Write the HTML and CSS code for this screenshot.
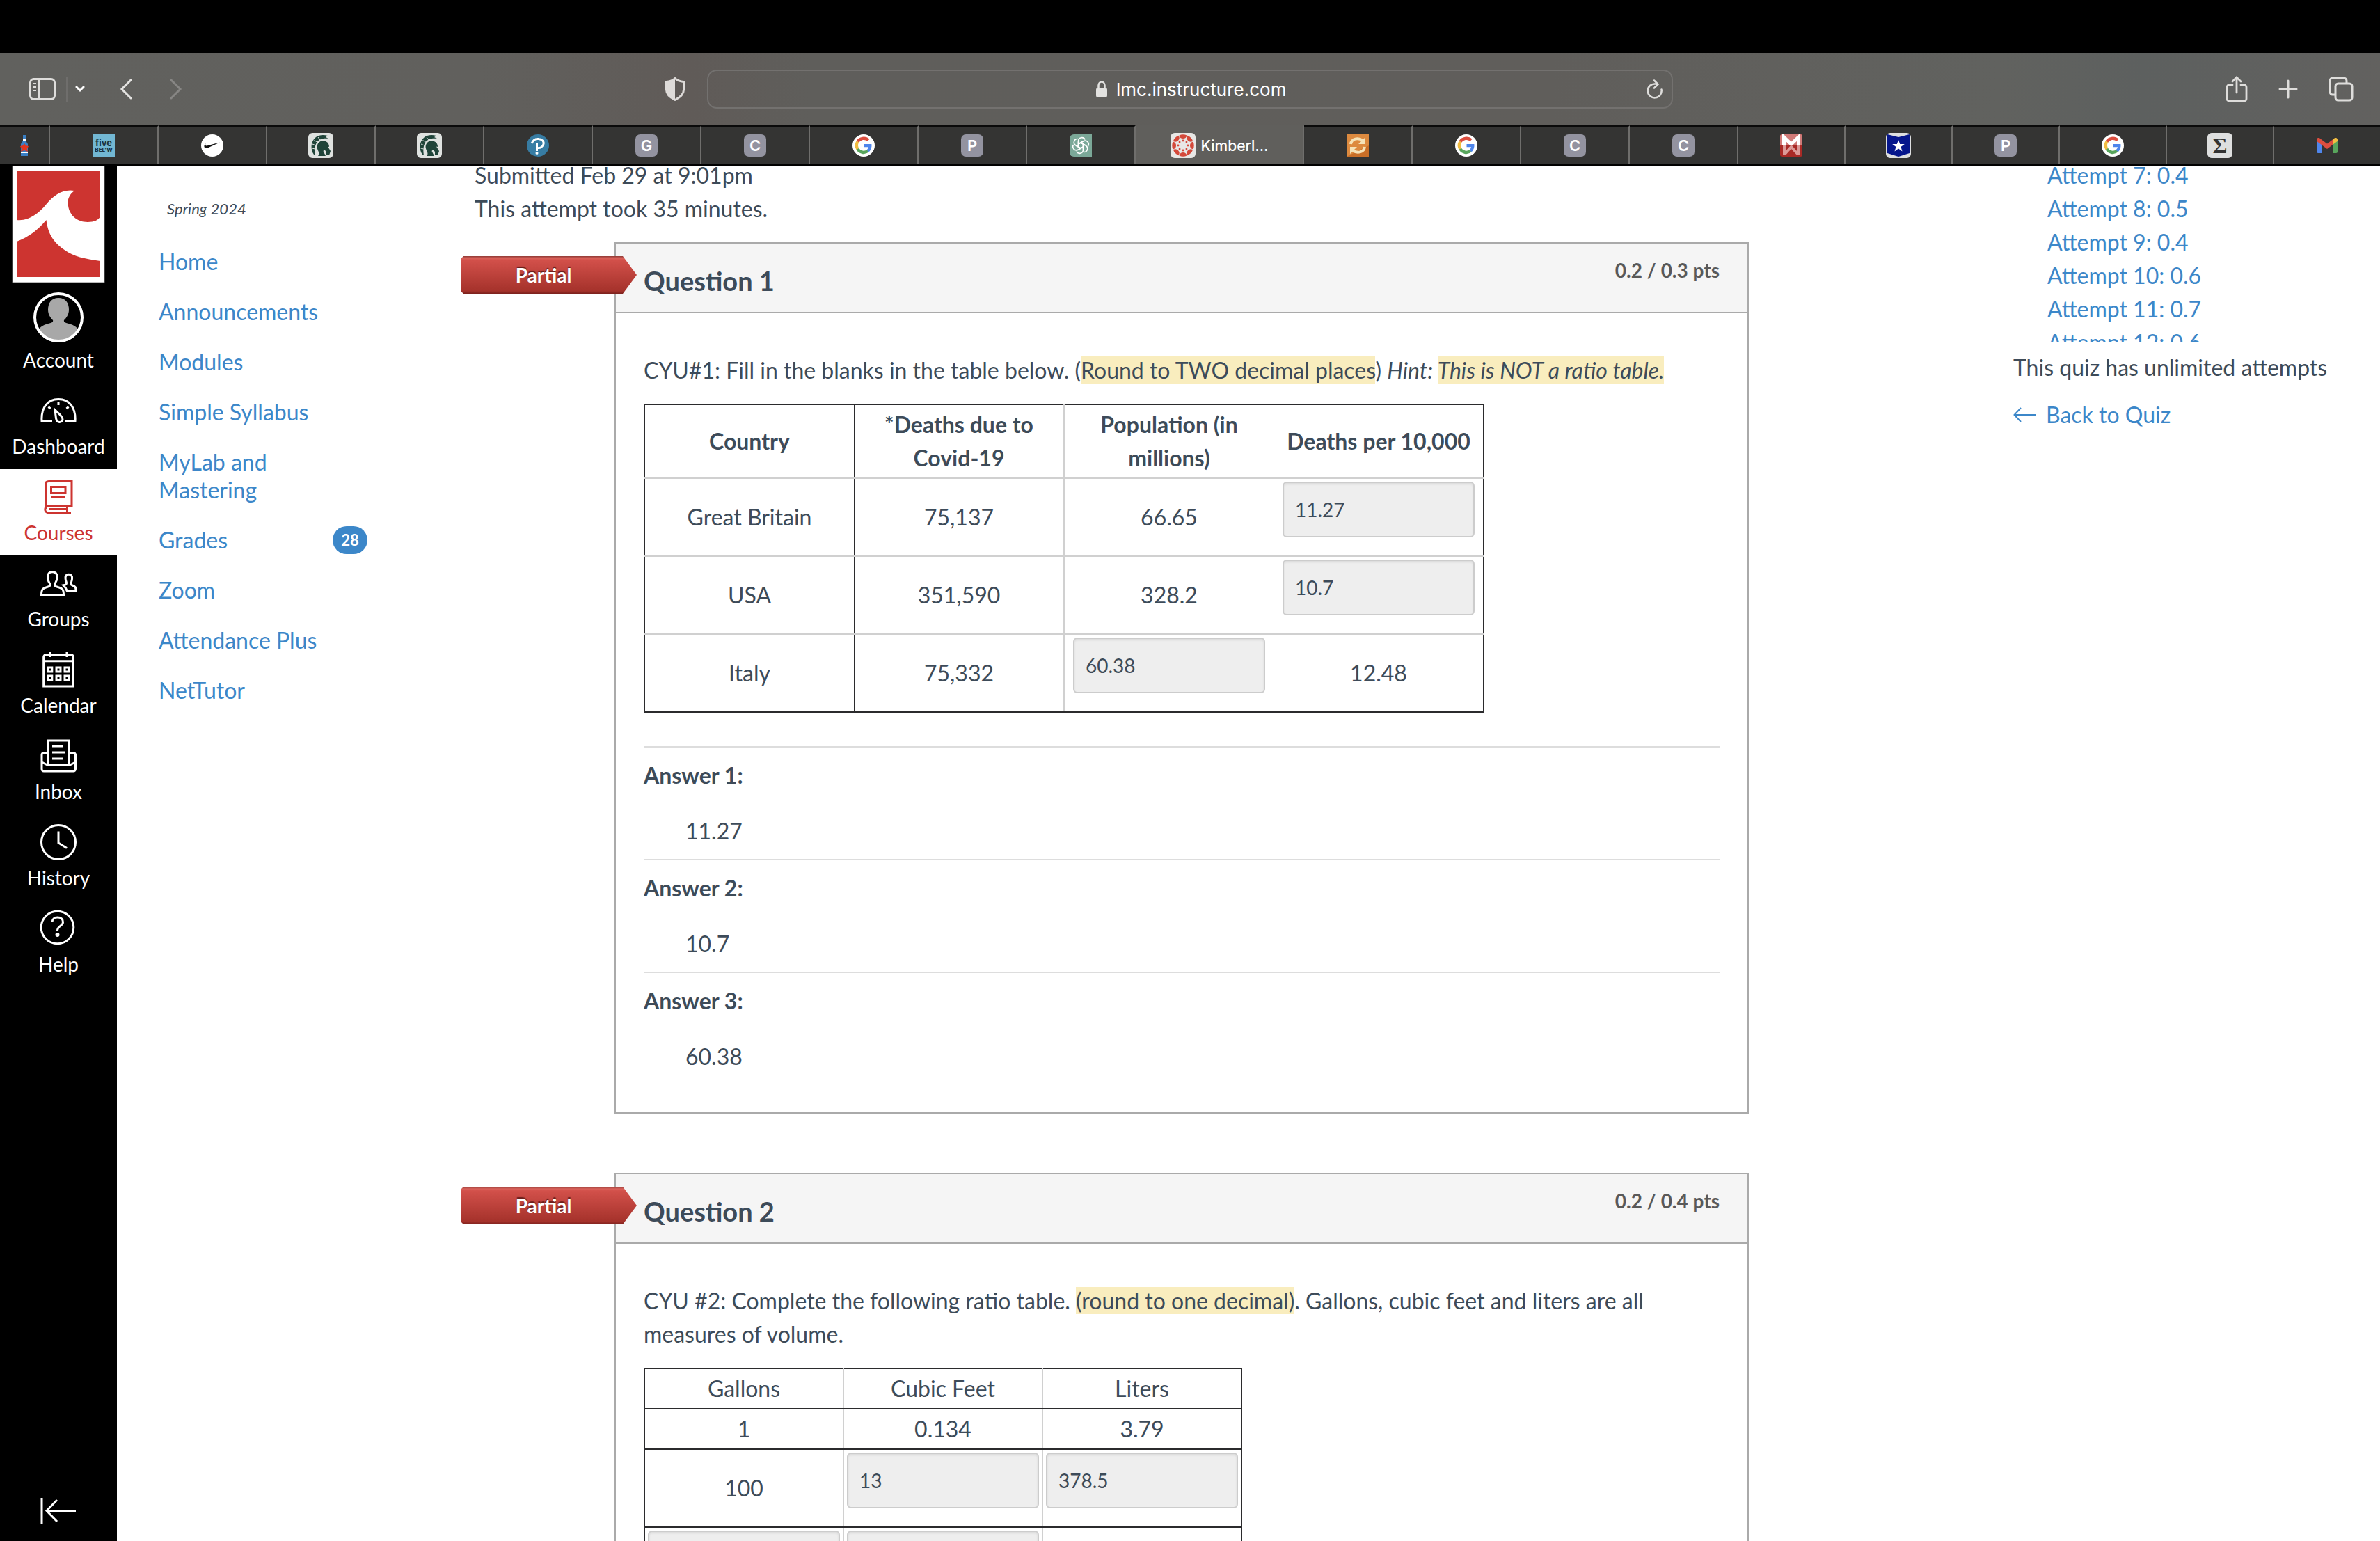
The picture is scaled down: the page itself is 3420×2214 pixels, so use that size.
FILE: index.html
```
<!DOCTYPE html>
<html lang="en">
<head>
  <meta charset="UTF-8" />
  <meta name="viewport" content="width=device-width, initial-scale=1.0"/>
  <title>Kimberl... - Quiz</title>
  <link rel="stylesheet" href="styles.css">
</head>
<body>

  <!-- shared icons -->
  <svg class="sprite" aria-hidden="true">
    <symbol id="google" viewBox="0 0 32 32">
      <circle cx="16" cy="16" r="16" fill="#fff"/>
      <path d="M7.3 10.6A10.3 10.3 0 0 1 23 8.4" fill="none" stroke="#dc4e3f" stroke-width="4.4"/>
      <path d="M7.5 21.3A10.3 10.3 0 0 1 7.5 10.4" fill="none" stroke="#f2bd42" stroke-width="4.4"/>
      <path d="M22.3 23.6A10 10 0 0 1 7.3 21" fill="none" stroke="#58a55c" stroke-width="4.4"/>
      <path d="M16.5 14H27.4C28 18.5 26.5 22.7 23.8 25.2L20.4 22.4C21.8 21.4 22.7 20 23 18.3H16.5Z" fill="#4f86ec"/>
    </symbol>
    <symbol id="spartan" viewBox="0 0 36 36">
      <rect width="36" height="36" rx="6" fill="#dfe2e0"/>
      <path d="M8 31C3 24 3 12 11 6C16 2.500 22 2.500 28 4L25 6L29 8C21 7 15 9 12 14C9 19 9 25 10 32Z" fill="#1f4439"/>
      <path d="M5.500 22l4 1M6 16l5 2M8.500 10.500l5 3M14 6l3 4" stroke="#dfe2e0" stroke-width="1"/>
      <path d="M12.500 20C13 14 18 10.500 23 11.500C28 12.500 30 16 30 20L28 19.500L32 26L30 32H26L26 27L23 24L21.500 26L25 33H14C18 29 13 26 12.500 20Z" fill="#1f4439"/>
    </symbol>
  </svg>

  <div class="menubar"></div>

  <header class="toolbar">
    <div class="toolbar-side">
      <button class="icon-btn sidebar-btn" aria-label="Sidebar">
        <svg width="38" height="32" viewBox="0 0 38 32" fill="none" stroke="#dedddb" stroke-width="3">
          <rect x="1.5" y="1.5" width="35" height="29" rx="5"/>
          <path d="M14 2v28"/>
          <path d="M5 8h5M5 13h5M5 18h5" stroke-width="2"/>
        </svg>
      </button>
      <button class="icon-btn menu-btn" aria-label="Tab groups">
        <svg width="14" height="10" viewBox="0 0 14 10" fill="none" stroke="#fff" stroke-width="3" stroke-linecap="round"><path d="M2 2l5 5 5-5"/></svg>
      </button>
      <button class="icon-btn back-btn" aria-label="Back">
        <svg width="18" height="30" viewBox="0 0 18 30" fill="none" stroke="#e4e3e1" stroke-width="3" stroke-linecap="round"><path d="M16 2L3 15l13 13"/></svg>
      </button>
      <button class="icon-btn forward-btn" aria-label="Forward">
        <svg width="18" height="30" viewBox="0 0 18 30" fill="none" stroke="#878684" stroke-width="3" stroke-linecap="round"><path d="M2 2l13 13L2 28"/></svg>
      </button>
      <button class="icon-btn shield-btn" aria-label="Privacy report">
        <svg width="28" height="34" viewBox="0 0 28 34">
          <path d="M14 1.500C17 4.500 21 6 26.500 6.500V18C26.500 25 20 29.500 14 32.500C8 29.500 1.500 25 1.500 18V6.500C7 6 11 4.500 14 1.500Z" fill="none" stroke="#dedbd9" stroke-width="3"/>
          <path d="M14 2V32C8 29 2 25 2 18V7C7 6 11 5 14 2Z" fill="#dedbd9"/>
        </svg>
      </button>
    </div>

    <div class="address">
      <svg width="18" height="24" viewBox="0 0 18 24"><rect x="1" y="10" width="16" height="14" rx="3" fill="#e3e2e0"/><path d="M4.500 11V6.500a4.500 5 0 0 1 9 0V11" fill="none" stroke="#e3e2e0" stroke-width="2.500"/></svg>
      <input type="text" aria-label="Address" value="lmc.instructure.com">
      <button class="icon-btn reload-btn" aria-label="Reload">
        <svg width="24" height="28" viewBox="0 0 24 28" fill="none" stroke="#dedddb" stroke-width="2.500" stroke-linecap="round"><path d="M21.500 14.500A10 10 0 1 1 13 6.500L16 7M11 1.500L16.500 7L11 12.500"/></svg>
      </button>
    </div>

    <div class="toolbar-side toolbar-right">
      <button class="icon-btn" aria-label="Share">
        <svg width="32" height="38" viewBox="0 0 32 38" fill="none" stroke="#dedddb" stroke-width="2.800" stroke-linecap="round"><path d="M10 13H5a3 3 0 0 0-3 3V33a3 3 0 0 0 3 3H27a3 3 0 0 0 3-3V16a3 3 0 0 0-3-3H22M16 24V2M10 8l6-6 6 6"/></svg>
      </button>
      <button class="icon-btn" aria-label="New tab">
        <svg width="28" height="28" viewBox="0 0 28 28" stroke="#dedddb" stroke-width="3" stroke-linecap="round"><path d="M14 2v24M2 14h24"/></svg>
      </button>
      <button class="icon-btn" aria-label="Tab overview">
        <svg width="36" height="36" viewBox="0 0 36 36" fill="none" stroke="#dedddb" stroke-width="3"><rect x="10" y="10" width="24" height="24" rx="4"/><path d="M10 26H6a4 4 0 0 1-4-4V6a4 4 0 0 1 4-4H22a4 4 0 0 1 4 4V10"/></svg>
      </button>
    </div>
  </header>

  <nav class="tabs" aria-label="Tabs">
    <button class="tab tab-first" aria-label="Pinned">
      <svg width="12" height="32" viewBox="0 0 12 32"><path d="M4 1h4v8l3 5V31H1V14l3-5z" fill="#3a7fc4"/><path d="M4 6h4v4H4zM1 25h10v2H1z" fill="#fff"/><path d="M0 17l4-1 2-3 2 3 4 1-2 4 1 4-5-2-5 2 1-4z" fill="#e0351f"/></svg>
    </button>
    <button class="tab"><span class="fav five"><b>five</b><small>BEL'W</small></span></button>
    <button class="tab" aria-label="Nike">
      <svg width="32" height="32" viewBox="0 0 32 32"><circle cx="16" cy="16" r="16" fill="#fff"/><path d="M27 11.500L9.500 19.400C6.500 20.500 4.300 19.500 4.400 17C4.500 15.500 5.200 14.300 6.300 13C5.600 15.800 6.500 16.900 9 16.300Z" fill="#111"/></svg>
    </button>
    <button class="tab" aria-label="Spartans"><svg width="36" height="36"><use href="#spartan"/></svg></button>
    <button class="tab" aria-label="Spartans"><svg width="36" height="36"><use href="#spartan"/></svg></button>
    <button class="tab" aria-label="Pearson">
      <svg width="32" height="32" viewBox="0 0 32 32"><circle cx="16" cy="16" r="16" fill="#377ca3"/><path d="M7 13C9 8 13 6 17 6.500C22 7 25 10 24 14C23 18 19 20 16 19.500M14.500 12V24" fill="none" stroke="#fff" stroke-width="3"/><circle cx="14.500" cy="27" r="2" fill="#fff"/></svg>
    </button>
    <button class="tab"><span class="fav letter">G</span></button>
    <button class="tab"><span class="fav letter">C</span></button>
    <button class="tab" aria-label="Google"><svg width="32" height="32"><use href="#google"/></svg></button>
    <button class="tab"><span class="fav letter">P</span></button>
    <button class="tab" aria-label="ChatGPT">
      <svg width="32" height="32" viewBox="0 0 32 32"><path d="M6 0H32V32H6a6 6 0 0 1-6-6V6a6 6 0 0 1 6-6z" fill="#7ba898"/>
        <g fill="none" stroke="#fff" stroke-width="1.600">
          <path id="petal" d="M12.500 18V10C12.500 4 20 3 22 7.500M12.500 14L19 10.200"/>
          <use href="#petal" transform="rotate(60 16 16)"/><use href="#petal" transform="rotate(120 16 16)"/><use href="#petal" transform="rotate(180 16 16)"/><use href="#petal" transform="rotate(240 16 16)"/><use href="#petal" transform="rotate(300 16 16)"/>
        </g></svg>
    </button>
    <button class="tab tab-active">
      <svg width="36" height="36" viewBox="0 0 36 36"><rect width="36" height="36" rx="6" fill="#e8e7e5"/>
        <g fill="#d4493a">
          <g id="quad"><path d="M12.500 3.500Q18 1 23.500 3.500Q22.500 8 18 8Q13.500 8 12.500 3.500Z"/><circle cx="18" cy="11" r="1.400"/></g>
          <use href="#quad" transform="rotate(45 18 18)"/><use href="#quad" transform="rotate(90 18 18)"/><use href="#quad" transform="rotate(135 18 18)"/><use href="#quad" transform="rotate(180 18 18)"/><use href="#quad" transform="rotate(225 18 18)"/><use href="#quad" transform="rotate(270 18 18)"/><use href="#quad" transform="rotate(315 18 18)"/>
        </g></svg>
      Kimberl...
    </button>
    <button class="tab" aria-label="Converter">
      <svg width="32" height="32" viewBox="0 0 32 32"><rect width="32" height="32" fill="#dd8a3f"/><path d="M0 32H32V16z" fill="#c96f28"/><path d="M6 14C7 6 17 4 23 9M26 18C25 26 15 28 9 23" fill="none" stroke="#f6e3b8" stroke-width="4"/><path d="M27 4v10H17zM5 28V18h10z" fill="#f6e3b8"/></svg>
    </button>
    <button class="tab" aria-label="Google"><svg width="32" height="32"><use href="#google"/></svg></button>
    <button class="tab"><span class="fav letter">C</span></button>
    <button class="tab"><span class="fav letter">C</span></button>
    <button class="tab tab-flex" aria-label="M">
      <svg width="32" height="32" viewBox="0 0 32 32"><rect width="32" height="32" rx="3" fill="#a92a26"/><path d="M3 0H29a3 3 0 0 1 3 3V16H0V3a3 3 0 0 1 3-3z" fill="#d07a78"/><path d="M5.500 16V4L16 14L26.500 4V16" fill="none" stroke="#fff" stroke-width="5"/><path d="M6 16V29M26 16V29M7 28L16 18L25 28" fill="none" stroke="#dc9a98" stroke-width="4"/></svg>
    </button>
    <button class="tab tab-flex" aria-label="Star">
      <svg width="36" height="36" viewBox="0 0 36 36"><rect width="36" height="36" rx="6" fill="#dedfe0"/><path d="M2 2L18 6L34 2V29L18 34L2 29Z" fill="#06168c"/><path d="M18 10l2.200 6h6.600l-5.300 4 2 6.500-5.500-4-5.500 4 2-6.500-5.300-4h6.600z" fill="#fff"/></svg>
    </button>
    <button class="tab tab-flex"><span class="fav letter">P</span></button>
    <button class="tab tab-flex" aria-label="Google"><svg width="32" height="32"><use href="#google"/></svg></button>
    <button class="tab tab-flex"><span class="fav sigma">Σ</span></button>
    <button class="tab tab-flex tab-last" aria-label="Gmail">
      <svg width="30" height="22" viewBox="0 0 30 22"><path d="M0 4v16a2 2 0 0 0 2 2h5V9z" fill="#4f86ec"/><path d="M30 4v16a2 2 0 0 1-2 2h-5V9z" fill="#58a55c"/><path d="M23 2.500V10l7-5.300V3c0-3-3-4-5-2z" fill="#f2bd42"/><path d="M0 3c0-3 3-4 5-2l10 7.500L23 2.500V10l-8 6L0 4.700z" fill="#dc4e3f"/></svg>
    </button>
  </nav>

  <div class="page">
    <nav class="global-nav" aria-label="Global">
      <a class="logo" href="#" aria-label="College home">
        <svg width="134" height="169" viewBox="0 0 134 169"><rect x="1" y="0" width="132" height="168" fill="#fff" stroke="#777" stroke-width="1"/><rect x="8" y="7.500" width="118" height="152.500" fill="#cd3430"/><path d="M7 78C24 80 38 69 49 56C60 42 74 33 90 36C83 41 80 48 80.700 54C81 70 93 81 109 81C118 81 125 78 127 73V137C105 134 88 130 77 122C62 112 52 100 49.500 78C38 92 25 102 7 109Z" fill="#fff"/></svg>
      </a>
      <a class="nav-item" href="#">
        <svg class="avatar" width="72" height="72" viewBox="0 0 72 72"><circle cx="36" cy="36" r="34" fill="#000"/><path d="M36 8C46 8 51 15 51 25C51 32 47 37 44 40C43 44 47 44 54 46C60 48 63 51 66 55A35 35 0 0 1 6 55C9 51 12 48 18 46C25 44 29 44 28 40C25 37 21 32 21 25C21 15 26 8 36 8Z" fill="#a8a8a8"/><circle cx="36" cy="36" r="34" fill="none" stroke="#fff" stroke-width="4"/></svg>
        Account
      </a>
      <a class="nav-item" href="#">
        <svg width="52" height="52" viewBox="0 0 52 52"><path d="M17 40.500H2C1 22 10 9.500 26 9.500S51 22 50 40.500H36M26 14v4M11.500 20.500l3 2.500M40.500 20.500l-3 2.500"/><path d="M21 25C24 28 32 34 32 38.500C32 41 30 42.500 27.500 42.500C24.500 42.500 23 40 22.500 37Z"/></svg>
        Dashboard
      </a>
      <a class="nav-item active" href="#">
        <svg width="52" height="52" viewBox="0 0 52 52"><path d="M44 49H12C5 49 5 38.500 12 38.500H45V3.500H12C9 3.500 7.500 5 7.500 8V44M38.500 38.500V49M12.500 43.500H38M15.500 11.500H36V20.500H15.500ZM16 26.500H36"/></svg>
        Courses
      </a>
      <a class="nav-item" href="#">
        <svg width="52" height="52" viewBox="0 0 52 52"><path d="M1.500 42.500C1.500 34 4 33 11 31C14.500 30 15 28.500 13 25.500C11.500 23.500 10.500 20 10.500 17C10.500 12 13 9.800 17.300 9.800C21.600 9.800 24.100 12 24.100 17C24.100 20 23 23.500 21.600 25.500C19.800 28.500 20 30 23.600 31C31 33 33.500 34 33.500 42.500Z"/><path d="M38.500 37.500H51C51 31.500 50.500 30.500 46 29C43.500 28 43.600 26 44.500 24C45.300 22 45.600 20.500 45.600 18.500C45.600 15 43.800 13.200 40.800 13.200C37.800 13.200 36 15 36 18.500C36 20.500 36.400 22 37.200 24C38 26.500 37.500 28 33 28.800C35 30.500 37 33 38.500 37.500Z"/></svg>
        Groups
      </a>
      <a class="nav-item" href="#">
        <svg width="52" height="52" viewBox="0 0 52 52"><path d="M4.700 50V8a3.500 3.500 0 0 1 3.500-3.500H44a3.500 3.500 0 0 1 3.500 3.500V50ZM5 13.800H47M13.800 1v7M38 1v7"/><path d="M10.800 23h6v6h-6zM23 23h6v6h-6zM35 23h6v6h-6zM10.800 35h6v6h-6zM23 35h6v6h-6zM35 35h6v6h-6z"/></svg>
        Calendar
      </a>
      <a class="nav-item" href="#">
        <svg width="52" height="52" viewBox="0 0 52 52"><path d="M11 39.500V4H41.500V39.500M11 21.500H5A3 3 0 0 0 2 24.500V45a3 3 0 0 0 3 3H47.500a3 3 0 0 0 3-3V24.500a3 3 0 0 0-3-3H41.500M2 35L11 39.500H41.500L50.500 35M17 12H32M17 21H35M17 30H32"/></svg>
        Inbox
      </a>
      <a class="nav-item" href="#">
        <svg width="52" height="52" viewBox="0 0 52 52"><circle cx="26" cy="26" r="24.500"/><path d="M26 10.500V27L38 34.500"/></svg>
        History
      </a>
      <a class="nav-item" href="#">
        <svg width="52" height="52" viewBox="0 0 52 52"><circle cx="24.500" cy="24.500" r="23.300"/><path d="M17 17C17 12.500 20 10 24.500 10C29.500 10 32.500 12.500 32.500 17C32.500 22.500 24.500 22 24.500 29"/><circle cx="24.500" cy="35" r="1.500"/></svg>
        Help
      </a>
      <button class="collapse-btn" aria-label="Minimize global navigation">
        <svg width="52" height="40" viewBox="0 0 52 40" fill="none" stroke="#fff" stroke-width="3"><path d="M2 2V39M51 20.500H9M24 5L9 20.500L24 36"/></svg>
      </button>
    </nav>

    <nav class="course-nav" aria-label="Course">
      <p class="term">Spring 2024</p>
      <ul>
        <li><a href="#">Home</a></li>
        <li><a href="#">Announcements</a></li>
        <li><a href="#">Modules</a></li>
        <li><a href="#">Simple Syllabus</a></li>
        <li><a href="#">MyLab and Mastering</a></li>
        <li><a href="#">Grades <span class="badge">28</span></a></li>
        <li><a href="#">Zoom</a></li>
        <li><a href="#">Attendance Plus</a></li>
        <li><a href="#">NetTutor</a></li>
      </ul>
    </nav>

    <main class="content">
      <p>Submitted Feb 29 at 9:01pm</p>
      <p>This attempt took 35 minutes.</p>

      <section class="question first">
        <span class="flag">Partial</span>
        <div class="question-header">
          <h2>Question 1</h2>
          <span class="points">0.2 / 0.3 pts</span>
        </div>
        <div class="question-body">
          <p class="question-text">CYU#1: Fill in the blanks in the table below. (<mark>Round to TWO decimal places</mark>) <em>Hint: <mark>This is NOT a ratio table.</mark></em></p>
          <table class="deaths-table">
            <tr>
              <th>Country</th>
              <th>*Deaths due to Covid-19</th>
              <th>Population (in millions)</th>
              <th>Deaths per 10,000</th>
            </tr>
            <tr>
              <td>Great Britain</td>
              <td>75,137</td>
              <td>66.65</td>
              <td><input type="text" aria-label="Great Britain deaths per 10,000" value="11.27" readonly></td>
            </tr>
            <tr>
              <td>USA</td>
              <td>351,590</td>
              <td>328.2</td>
              <td><input type="text" aria-label="USA deaths per 10,000" value="10.7" readonly></td>
            </tr>
            <tr>
              <td>Italy</td>
              <td>75,332</td>
              <td><input type="text" aria-label="Italy population" value="60.38" readonly></td>
              <td>12.48</td>
            </tr>
          </table>

          <div class="answer">
            <h3>Answer 1:</h3>
            <p>11.27</p>
          </div>
          <div class="answer">
            <h3>Answer 2:</h3>
            <p>10.7</p>
          </div>
          <div class="answer">
            <h3>Answer 3:</h3>
            <p>60.38</p>
          </div>
        </div>
      </section>

      <section class="question">
        <span class="flag">Partial</span>
        <div class="question-header">
          <h2>Question 2</h2>
          <span class="points">0.2 / 0.4 pts</span>
        </div>
        <div class="question-body">
          <p class="question-text">CYU #2: Complete the following ratio table. <mark>(round to one decimal)</mark>. Gallons, cubic feet and liters are all measures of volume.</p>
          <table class="volume-table">
            <tr>
              <td>Gallons</td>
              <td>Cubic Feet</td>
              <td>Liters</td>
            </tr>
            <tr>
              <td>1</td>
              <td>0.134</td>
              <td>3.79</td>
            </tr>
            <tr>
              <td>100</td>
              <td><input type="text" aria-label="Cubic feet for 100 gallons" value="13" readonly></td>
              <td><input type="text" aria-label="Liters for 100 gallons" value="378.5" readonly></td>
            </tr>
            <tr>
              <td><input type="text" aria-label="Gallons" readonly></td>
              <td><input type="text" aria-label="Cubic feet" readonly></td>
              <td></td>
            </tr>
          </table>
        </div>
      </section>
    </main>

    <aside class="attempts">
      <ul>
        <li><a href="#">Attempt 7: 0.4</a></li>
        <li><a href="#">Attempt 8: 0.5</a></li>
        <li><a href="#">Attempt 9: 0.4</a></li>
        <li><a href="#">Attempt 10: 0.6</a></li>
        <li><a href="#">Attempt 11: 0.7</a></li>
        <li><a href="#">Attempt 12: 0.6</a></li>
      </ul>
      <p>This quiz has unlimited attempts</p>
      <a class="back-link" href="#">
        <svg width="32" height="24" viewBox="0 0 32 24" fill="none" stroke="#3c87c9" stroke-width="2"><path d="M32 12H2M11 2L1.500 12L11 22"/></svg>
        Back to Quiz
      </a>
    </aside>
  </div>

</body>
</html>
```

FILE: styles.css
```
* {
  box-sizing: border-box;
}

body {
  margin: 0;
  height: 100vh;
  display: flex;
  flex-direction: column;
  overflow: hidden;
  background: #fff;
  color: #3d4b59;
  font-family: Lato, sans-serif;
  font-size: 32px;
  line-height: 48px;
}

p, h2, h3, ul {
  margin: 0;
  padding: 0;
}

ul {
  list-style: none;
}

a {
  color: #3c87c9;
  text-decoration: none;
}

button {
  border: none;
  background: none;
  padding: 0;
  cursor: pointer;
}

svg {
  display: block;
  flex-shrink: 0;
}

.sprite {
  position: absolute;
  width: 0;
  height: 0;
}

/* Browser window */
.menubar {
  height: 76px;
  flex-shrink: 0;
  background: #000;
}

.toolbar {
  display: grid;
  grid-template-columns: 1fr 1388px 1fr;
  align-items: center;
  flex-shrink: 0;
  height: 104px;
  background: linear-gradient(90deg, #61615e 0%, #61605d 20%, #605b58 29%, #5f5e5b 34%, #605e5b 65%, #61625f 84%, #5d605f 90%, #62615f 100%);
}

.toolbar-side {
  display: flex;
  align-items: center;
}

.icon-btn {
  display: flex;
}

.sidebar-btn {
  margin-left: 42px;
  padding-right: 15px;
}

.menu-btn {
  padding: 13px 0 13px 11px;
  border-left: 2px solid #6f6e6c;
}

.back-btn {
  margin-left: 50px;
}

.forward-btn {
  margin-left: 54px;
}

.shield-btn {
  margin-left: auto;
  margin-right: 32px;
}

.toolbar-right {
  justify-content: flex-end;
  gap: 44px;
  padding-right: 38px;
}

.address {
  display: flex;
  align-items: center;
  justify-content: center;
  position: relative;
  height: 56px;
  border: 2px solid #73716f;
  border-radius: 14px;
}

.address input {
  width: 242px;
  margin-left: 12px;
  padding: 0;
  border: none;
  outline: none;
  background: none;
  color: #fff;
  font-family: Inter, sans-serif;
  font-size: 26px;
}

.reload-btn {
  position: absolute;
  right: 12px;
}

.tabs {
  display: flex;
  flex-shrink: 0;
  height: 58px;
  background: #343433;
  border-bottom: 2px solid #000;
}

.tab {
  display: flex;
  align-items: center;
  justify-content: center;
  flex: 0 0 156px;
  border-top: 2px solid #0a0a0a;
  border-right: 2px solid #6f6e6c;
  color: #fff;
}

.tab-first {
  flex-basis: 72px;
}

.tab-flex {
  flex: 1;
}

.tab-last {
  border-right: none;
}

.tab-active {
  flex-basis: 242px;
  gap: 8px;
  background: #605f5c;
  border-top-color: #605f5c;
  font-family: Inter, sans-serif;
  font-size: 21px;
  font-weight: 500;
}

.fav {
  display: flex;
  align-items: center;
  justify-content: center;
  width: 32px;
  height: 32px;
  font-family: Inter, sans-serif;
}

.letter {
  background: #9393a0;
  border-radius: 7px;
  font-size: 22px;
  font-weight: 600;
}

.five {
  flex-direction: column;
  background: #72b7d3;
  color: #17333f;
  font-size: 13px;
  line-height: 12px;
}

.five small {
  font-size: 8px;
  line-height: 8px;
  font-weight: 800;
}

.sigma {
  width: 36px;
  height: 36px;
  background: #dedfdf;
  border-radius: 6px;
  color: #333;
  font-family: "Liberation Serif", serif;
  font-size: 32px;
  font-weight: bold;
}

/* Page */
.page {
  display: flex;
  flex: 1;
  min-height: 0;
  overflow: hidden;
}

.global-nav {
  display: flex;
  flex-direction: column;
  flex: 0 0 168px;
  background: #000;
}

.logo {
  align-self: center;
  margin-bottom: -1px;
}

.nav-item {
  display: flex;
  flex-direction: column;
  align-items: center;
  gap: 8px;
  padding: 14px 0 16px;
  color: #fff;
  font-size: 28px;
  line-height: 34px;
}

.nav-item svg:not(.avatar) {
  fill: none;
  stroke: currentColor;
  stroke-width: 3;
}

.nav-item.active {
  background: #fff;
  color: #cd3430;
}

.collapse-btn {
  align-self: center;
  margin-top: auto;
  margin-bottom: 24px;
}

.course-nav {
  flex: 0 0 490px;
  padding: 42px 126px 0 60px;
}

.term {
  padding-left: 12px;
  margin-bottom: 20px;
  font-size: 22px;
  line-height: 40px;
  font-style: italic;
}

.course-nav a {
  display: flex;
  justify-content: space-between;
  padding: 16px 4px 16px 0;
  line-height: 40px;
}

.course-nav li:nth-child(5) a {
  padding-right: 120px;
}

.badge {
  width: 50px;
  border-radius: 20px;
  background: #3c87c9;
  color: #fff;
  font-size: 22px;
  font-weight: bold;
  text-align: center;
}

/* The page is scrolled a little under the tab bar */
.content {
  flex: 1;
  margin-top: -10px;
  padding: 0 380px 0 24px;
}

.question {
  position: relative;
  margin: 0 0 85px 201px;
  border: 2px solid #aaa;
}

.question.first {
  margin-top: 24px;
}

.flag {
  position: absolute;
  top: 18px;
  left: -222px;
  width: 252px;
  height: 54px;
  padding-right: 16px;
  background: linear-gradient(#8f3a35 0, #d9615a 3px, #d2504a 6px, #a5322b 50px, #7a211c 54px);
  clip-path: polygon(0 3px, 3px 0, 232px 0, 252px 27px, 232px 54px, 3px 54px, 0 51px);
  color: #fff;
  font-size: 28px;
  font-weight: bold;
  line-height: 54px;
  text-align: center;
  text-shadow: 0 -2px 1px #6b1f1b;
}

.question-header {
  display: flex;
  justify-content: space-between;
  padding: 18px 40px;
  background: #f5f5f5;
  border-bottom: 2px solid #aaa;
}

.question-header h2 {
  padding-top: 8px;
  font-size: 38px;
  line-height: 54px;
}

.points {
  color: #595959;
  font-size: 28px;
  font-weight: bold;
  line-height: 40px;
}

.question-body {
  padding: 58px 40px 40px;
}

.question-text {
  margin-bottom: 24px;
}

mark {
  background: #f9edbe;
  color: inherit;
}

table {
  table-layout: fixed;
  border-collapse: collapse;
  margin-bottom: 48px;
  border: 2px solid #2b2b2d;
}

.deaths-table {
  width: 1208px;
}

.volume-table {
  width: 860px;
}

th, td {
  padding: 4px 0;
  border: 2px solid #d0d0d0;
  text-align: center;
}

.deaths-table th {
  padding: 4px 10px;
}

.deaths-table tr > :nth-child(odd) {
  border-right: 1px solid #2b2b2d;
}

.deaths-table tr > :nth-child(even) {
  border-left: 1px solid #2b2b2d;
}

table tr:first-child > * {
  border-top-color: #2b2b2d;
}

table tr:last-child > * {
  border-bottom-color: #2b2b2d;
}

tr > :first-child {
  border-left-color: #2b2b2d;
}

tr > :last-child {
  border-right-color: #2b2b2d;
}

.volume-table td {
  border-top-color: #2b2b2d;
  border-bottom-color: #2b2b2d;
}

td input {
  display: block;
  width: 276px;
  height: 80px;
  margin: 0 auto 22px;
  padding: 0 16px;
  border: 2px solid #ccc;
  border-radius: 6px;
  background: #eee;
  box-shadow: inset 0 2px 3px rgba(0, 0, 0, 0.08);
  color: #3d4b59;
  font-family: Lato, sans-serif;
  font-size: 28px;
}

.answer {
  padding: 16px 0;
  border-top: 2px solid #ddd;
}

.answer h3 {
  margin-bottom: 32px;
  font-size: 32px;
}

.answer p {
  padding-left: 60px;
}

.attempts {
  flex: 0 0 527px;
  margin-top: -10px;
}

.attempts ul {
  height: 264px;
  margin-bottom: 12px;
  padding-left: 49px;
  overflow: hidden;
}

.back-link {
  display: flex;
  align-items: center;
  gap: 15px;
  margin-top: 20px;
}
```
